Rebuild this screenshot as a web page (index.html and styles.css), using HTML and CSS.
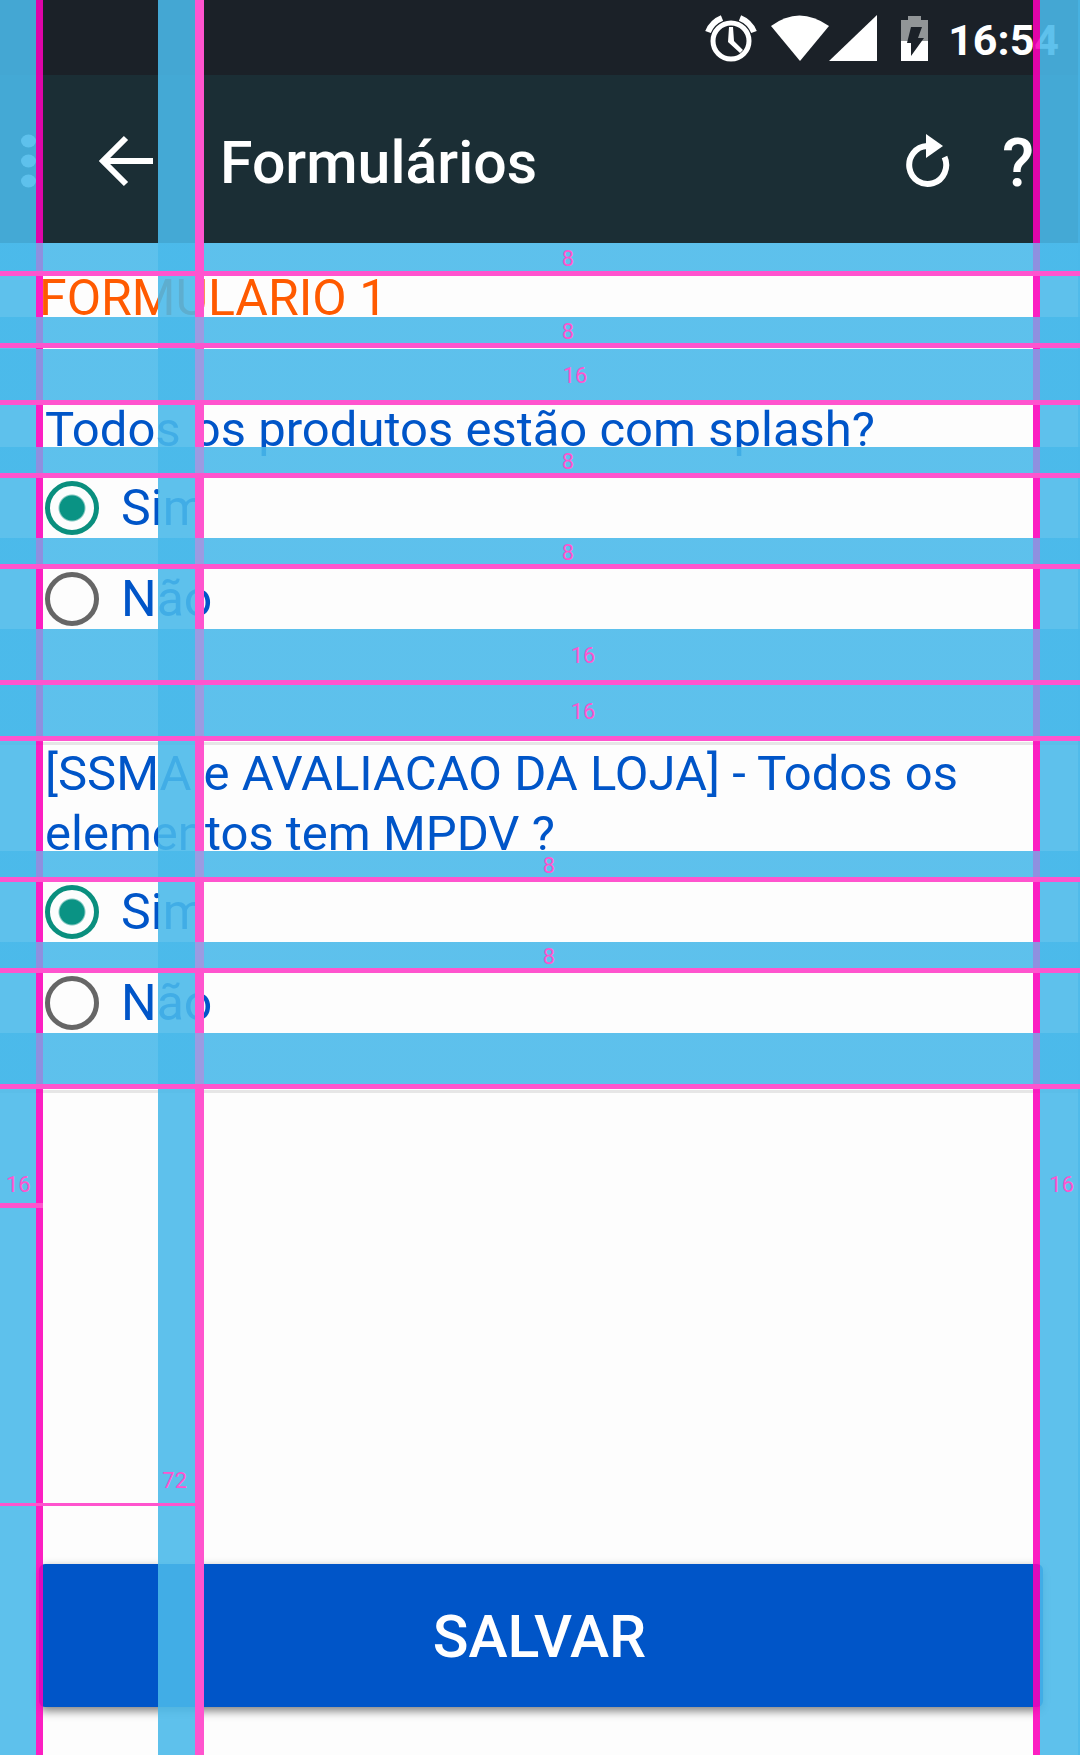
FILE: index.html
```html
<!DOCTYPE html>
<html lang="pt-BR">
<head>
<meta charset="utf-8">
<meta name="viewport" content="width=device-width, initial-scale=1">
<title>Formulários</title>
<link rel="stylesheet" href="styles.css">
</head>
<body>
<div class="screen">
  <div class="status">
    <svg class="status-alarm" width="52" height="48" viewBox="0 0 52 48" aria-hidden="true">
      <circle cx="26" cy="27" r="18" fill="none" stroke="#fff" stroke-width="5"/>
      <path d="M24 13h4l1 14 9 9-3 3-12-11z" fill="#fff"/>
      <path d="M3 18Q7 8 17 4M49 18Q45 8 35 4" fill="none" stroke="#fff" stroke-width="6"/>
    </svg>
    <svg class="status-wifi" width="58" height="48" viewBox="0 0 58 48" aria-hidden="true"><path d="M0 12Q28-9 58 12L29 47z" fill="#fff"/></svg>
    <svg class="status-signal" width="48" height="48" viewBox="0 0 48 48" aria-hidden="true"><path d="M48 1v46H0z" fill="#fff"/></svg>
    <svg class="status-battery" width="27" height="48" viewBox="0 0 27 48" aria-hidden="true">
      <path d="M7 2h13v4h7v21H0V6h7z" fill="#919597"/><path d="M0 27h27v20H0z" fill="#fff"/>
      <path d="M10 13h11l-4 11h6L10 42V29H6z" fill="#1b2128"/>
    </svg>
    <time class="clock">16:54</time>
  </div>

  <header class="toolbar">
    <button class="icon-button more" type="button" aria-label="Mais opções">
      <svg width="15" height="54" viewBox="0 0 15 54"><g fill="#fff"><ellipse cx="7.5" cy="7" rx="7.5" ry="6.5"/><ellipse cx="7.5" cy="27" rx="7.5" ry="6.5"/><ellipse cx="7.5" cy="47" rx="7.5" ry="6.5"/></g></svg>
    </button>
    <button class="icon-button back" type="button" aria-label="Voltar">
      <svg width="54" height="52" viewBox="0 0 54 52"><path d="M27 3L4 26l23 23M4 26h50" fill="none" stroke="#fff" stroke-width="6"/></svg>
    </button>
    <h1 class="title">Formulários</h1>
    <button class="icon-button refresh" type="button" aria-label="Atualizar">
      <svg width="44" height="54" viewBox="0 0 44 54"><path d="M21 12A18.500 19 0 1 0 38.500 23" fill="none" stroke="#fff" stroke-width="6"/><path d="M20 0l17 12-17 12z" fill="#fff"/></svg>
    </button>
    <button class="icon-button help" type="button" aria-label="Ajuda">?</button>
  </header>

  <form class="form">
    <div class="gap gap-top"><span>8</span></div>
    <h2 class="form-name">FORMULARIO 1</h2>
    <div class="gap"><span>8</span></div>
    <div class="gap gap-large gap-after"><span class="shift">16</span></div>

    <p class="question" id="q1">Todos os produtos estão com splash?</p>
    <div class="gap"><span>8</span></div>
    <label class="option"><input type="radio" name="splash" aria-describedby="q1" checked>Sim</label>
    <div class="gap"><span>8</span></div>
    <label class="option"><input type="radio" name="splash" aria-describedby="q1">Não</label>
    <div class="gap gap-large"><span class="shift-more">16</span></div>
    <div class="gap gap-large"><span class="shift-more">16</span></div>

    <hr class="rule">
    <p class="question" id="q2">[SSMA e AVALIACAO DA LOJA] - Todos os elementos tem MPDV ?</p>
    <div class="gap"><span class="shift-back">8</span></div>
    <label class="option"><input type="radio" name="mpdv" aria-describedby="q2" checked>Sim</label>
    <div class="gap"><span class="shift-back">8</span></div>
    <label class="option"><input type="radio" name="mpdv" aria-describedby="q2">Não</label>
    <div class="gap gap-large"></div>
    <hr class="rule">

    <div class="margins"><span>16</span><span>16</span></div>
    <div class="keyline"><span>72</span></div>
    <button class="save" type="submit">SALVAR</button>
  </form>

  <div class="column column-left"></div>
  <div class="column column-key"></div>
  <div class="column column-right"></div>
</div>
</body>
</html>
```
FILE: styles.css
```css
:root {
  --pink: #ff54ce;
  --magenta: rgba(252, 0, 186, .88);
  --cyan: rgba(73, 185, 234, .885);
  --blue: #0055c8;
  --cross: #8e90e0;
  --cross-key: #9b9be2;
}

* { box-sizing: border-box; }

body {
  margin: 0;
  background: #fdfdfd;
  font-family: Roboto, "Liberation Sans", sans-serif;
}

.screen {
  position: relative;
  display: flex;
  flex-direction: column;
  min-height: 100vh;
  overflow: hidden;
}

/* Status bar */
.status {
  display: flex;
  align-items: center;
  justify-content: flex-end;
  height: 75px;
  padding-right: 21px;
  background: #1b2128;
  color: #fff;
}
.status-wifi { margin-left: 14px; }
.status-battery { margin: 0 20px 0 24px; }
.clock { font-size: 43px; font-weight: 700; line-height: 48px; padding-top: 4px; }

/* Toolbar */
.toolbar {
  display: flex;
  align-items: center;
  height: 168px;
  padding: 3px 46px 0 21px;
  background: #1b2e35;
  color: #fff;
}
.icon-button {
  display: flex;
  padding: 0;
  border: 0;
  background: none;
  color: inherit;
  font: inherit;
}
.back { margin: 0 67px 0 63px; }
.title { flex: 1; margin: 0; padding-top: 4px; font-size: 59px; font-weight: 500; line-height: 72px; }
.refresh { margin-right: 52px; }
.help { padding-top: 6px; font-size: 66px; font-weight: 500; line-height: 72px; }

/* Form */
.form { display: flex; flex: 1; flex-direction: column; }
.form-name {
  margin: 0;
  padding: 3px 0 0 39px;
  color: #ff5a00;
  font-size: 50px;
  font-weight: 400;
  line-height: 38px;
}
.question {
  margin: -5px 0 -13px;
  padding: 0 60px 0 45px;
  color: var(--blue);
  font-size: 49px;
  line-height: 60px;
}
.option {
  display: flex;
  align-items: center;
  gap: 22px;
  padding-left: 45px;
  color: var(--blue);
  font-size: 50px;
  line-height: 60px;
}
.option input {
  width: 54px;
  height: 54px;
  margin: 0;
  appearance: none;
  border: 5px solid #666;
  border-radius: 50%;
}
.option input:checked {
  border-color: #0a8f7e;
  background: radial-gradient(circle, #0a9384 12px, transparent 14px);
}
.rule { width: 100%; height: 3px; margin: 1px 0 4px; border: 0; background: #e6e6e6; }
.save {
  height: 143px;
  margin: auto 37px 48px 39px;
  padding: 2px 3px 0 0;
  border: 0;
  border-radius: 6px;
  background: var(--blue);
  box-shadow: 0 4px 10px rgba(0, 0, 0, .5);
  color: #fff;
  font-family: inherit;
  font-size: 59px;
  font-weight: 500;
}

/* Spacing bands, closed by a pink line */
.gap {
  position: relative;
  z-index: 2;
  display: flex;
  align-items: center;
  justify-content: center;
  height: 31px;
  padding: 3px 0 0 56px;
  border-bottom: 5px solid var(--pink);
  background: linear-gradient(90deg,
    var(--cyan) 36px, var(--cross) 36px 43px,
    var(--cyan) 43px 195px, var(--cross-key) 195px 204px,
    var(--cyan) 204px calc(100% - 47px), var(--cross) calc(100% - 47px) calc(100% - 40px),
    var(--cyan) calc(100% - 40px)) padding-box;
}
.gap-top { height: 33px; --cross-key: var(--pink); }
.gap-large { height: 56px; }
.gap-after { margin-top: 1px; }
.gap span, .margins span, .keyline span { color: var(--pink); font-size: 22px; line-height: 26px; }
.gap .shift { padding-left: 14px; }
.gap .shift-more { padding-left: 30px; }
.gap .shift-back { padding-right: 38px; }

.margins {
  position: relative;
  z-index: 2;
  display: flex;
  justify-content: space-between;
  margin-top: 75px;
  padding: 0 6px 10px;
  background: linear-gradient(var(--pink), var(--pink)) left bottom / 43px 5px no-repeat;
}
.keyline {
  position: relative;
  z-index: 2;
  width: 195px;
  margin-top: 260px;
  padding: 0 8px 9px 0;
  border-bottom: 3px solid var(--pink);
  text-align: right;
}

/* Vertical guides over the whole screen */
.column {
  position: absolute;
  z-index: 1;
  top: 0;
  bottom: 0;
  background: var(--cyan) padding-box;
  pointer-events: none;
}
.column-left { left: 0; width: 43px; border-right: 7px solid var(--magenta); }
.column-key { left: 158px; width: 46px; border-right: 9px solid var(--pink); }
.column-right {
  right: 0;
  width: 47px;
  border-left: 7px solid var(--magenta);
  box-shadow: inset -2px 0 rgba(73, 183, 233, .6);
}
```
